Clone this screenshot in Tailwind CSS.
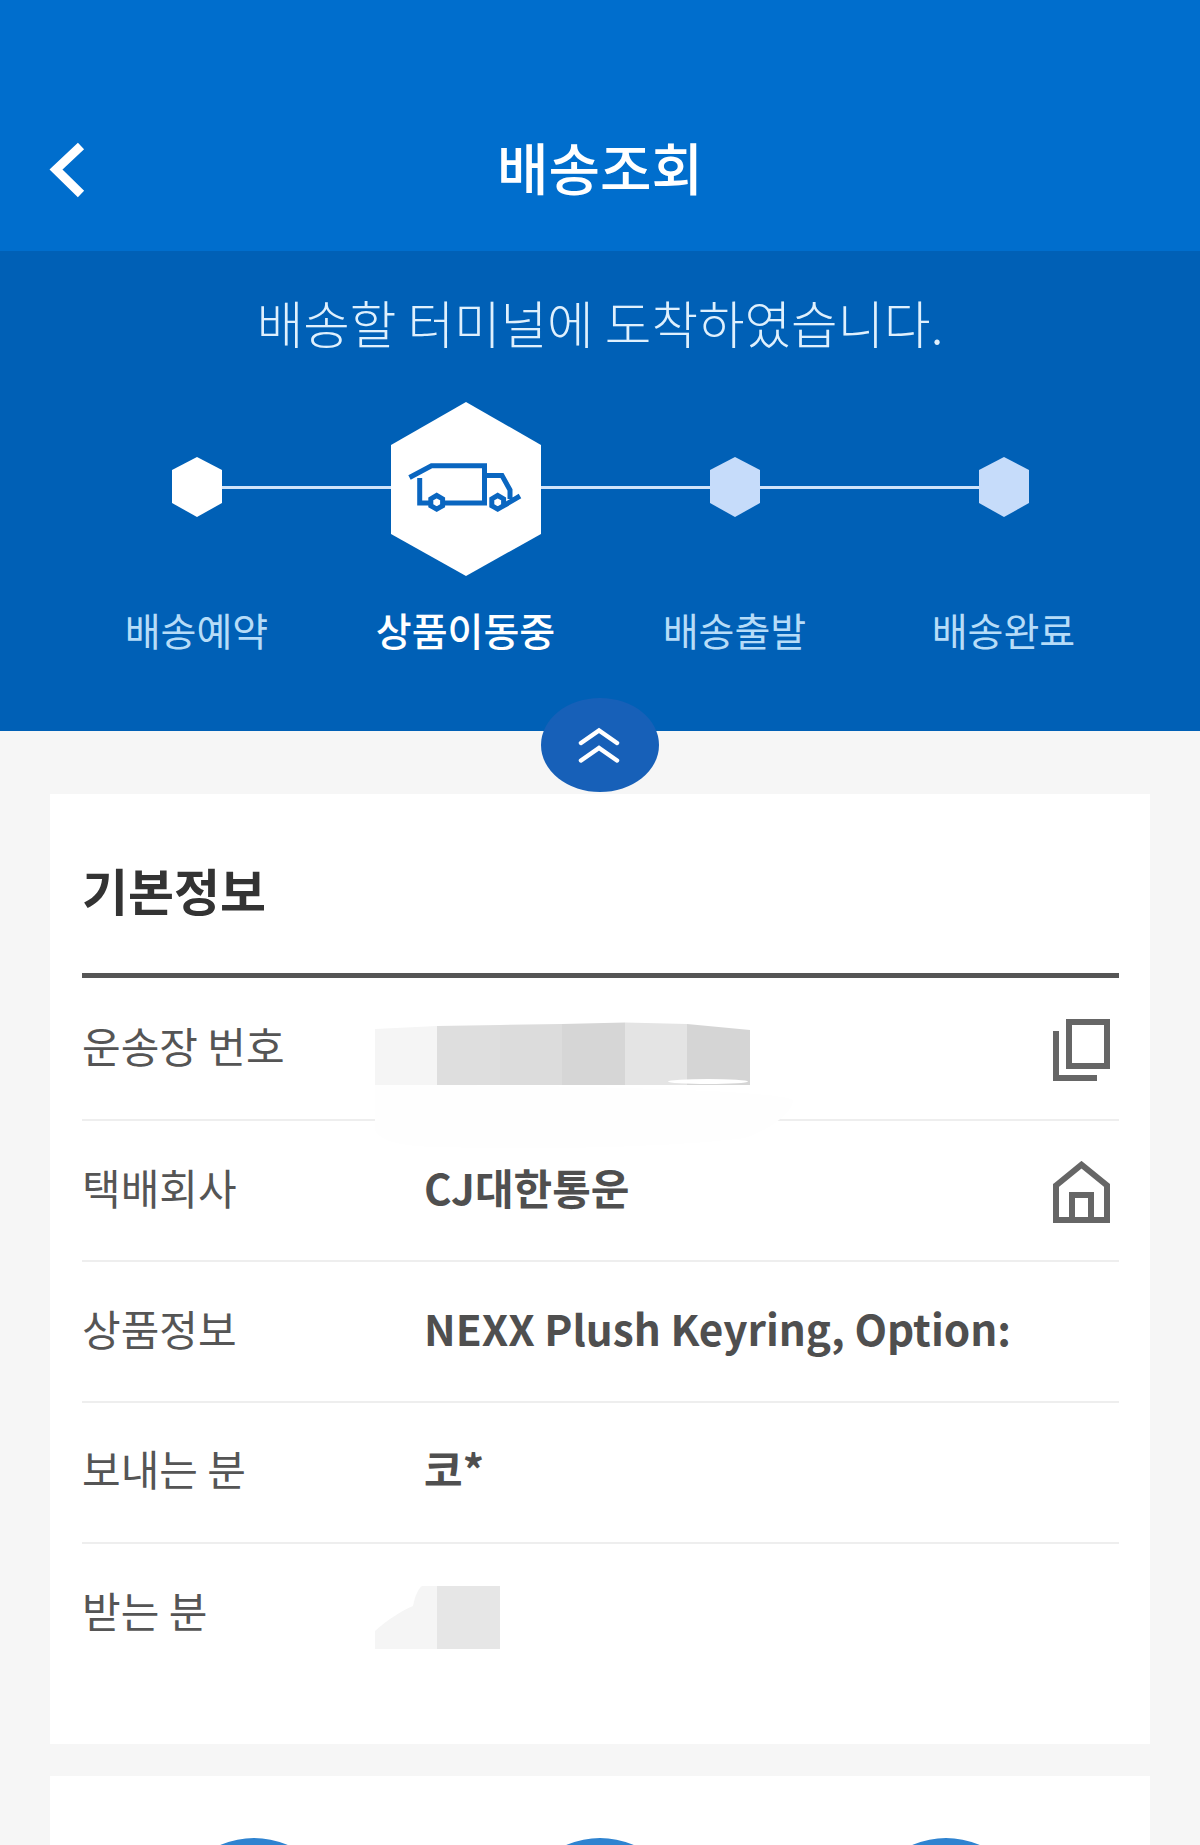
<!DOCTYPE html>
<html><head><meta charset="utf-8">
<script src="https://cdn.jsdelivr.net/npm/@tailwindcss/browser@4"></script>
</head>
<body class="m-0 bg-[#f6f6f6]">
<div class="relative w-[1200px] h-[1845px] overflow-hidden bg-[#f6f6f6] font-['Noto_Sans_CJK_KR','Noto_Sans',sans-serif] text-[#555]">
  <header class="relative h-[251px] bg-[#006ecd] text-white">
    <svg class="absolute left-[48px] top-[140px]" width="40" height="60" viewBox="0 0 40 60"><path d="M33 6 L8 29.5 L33 54" fill="none" stroke="#fff" stroke-width="9"/></svg>
    <h1 class="pt-[131px] text-center text-[56px] leading-[70px] font-medium">배송조회</h1>
  </header>
  <section class="relative h-[480px] bg-[#0060b6]">
    <p class="pt-[41px] pb-[1px] text-center text-[50.6px] leading-[60px] font-light text-[#dff0fd]">배송할 터미널에 도착하였습니다.</p>
    <div class="relative mx-[62px] mt-[49px] grid grid-cols-4">
      <div class="absolute left-[134px] right-[134px] top-[84px] h-[3px] bg-[#cfe3fa]"></div>
      <div class="relative flex flex-col items-center">
        <div class="h-[174px] pt-[55px]"><svg class="block" width="52" height="60" viewBox="0 0 52 60"><polygon points="26,0 51,13 51,46 26,60 1,46 1,13" fill="#fff"/></svg></div>
        <span class="mt-[25px] text-[39px] leading-[56px] text-[#b6dcf8]">배송예약</span>
      </div>
      <div class="relative flex flex-col items-center">
        <div class="relative h-[174px]">
          <svg class="block" width="152" height="174" viewBox="0 0 152 174"><polygon points="76,0 151,43 151,132 76,174 1,132 1,43" fill="#fff"/></svg>
          <svg class="absolute left-[10px] top-[48px]" width="130" height="70" viewBox="0 0 130 70">
            <path d="M9.5 27.5 L31.5 15.8 H84.5 V53 H44 M84.5 25.5 H102 L110 40 V49 M19.7 28 V53 H30 M105 55 L120 46" fill="none" stroke="#0a66c0" stroke-width="5"/>
            <polygon points="36.7,45.5 42.6,48.9 42.6,55.7 36.7,59.1 30.8,55.7 30.8,48.9" fill="#fff" stroke="#0a66c0" stroke-width="5"/>
            <polygon points="97.7,45.5 103.6,48.9 103.6,55.7 97.7,59.1 91.8,55.7 91.8,48.9" fill="#fff" stroke="#0a66c0" stroke-width="5"/>
          </svg>
        </div>
        <span class="mt-[25px] text-[39px] leading-[56px] font-medium text-white">상품이동중</span>
      </div>
      <div class="relative flex flex-col items-center">
        <div class="h-[174px] pt-[55px]"><svg class="block" width="52" height="60" viewBox="0 0 52 60"><polygon points="26,0 51,13 51,46 26,60 1,46 1,13" fill="#c6dcfa"/></svg></div>
        <span class="mt-[25px] text-[39px] leading-[56px] text-[#b6dcf8]">배송출발</span>
      </div>
      <div class="relative flex flex-col items-center">
        <div class="h-[174px] pt-[55px]"><svg class="block" width="52" height="60" viewBox="0 0 52 60"><polygon points="26,0 51,13 51,46 26,60 1,46 1,13" fill="#c6dcfa"/></svg></div>
        <span class="mt-[25px] text-[39px] leading-[56px] text-[#b6dcf8]">배송완료</span>
      </div>
    </div>
  </section>
  <div class="absolute left-[541px] top-[698px] flex h-[94px] w-[118px] items-center justify-center rounded-[50%] bg-[#1760b8]">
    <svg class="-translate-x-[1px]" width="44" height="36" viewBox="0 0 44 36"><path d="M4 16 L22 3.5 L40 16 M4 33.5 L22 21 L40 33.5" fill="none" stroke="#fff" stroke-width="4.5" stroke-linecap="round"/></svg>
  </div>
  <main class="mx-[50px] flex flex-col gap-[32px] pt-[63px]">
    <section class="h-[950px] bg-white px-[32px]">
      <h2 class="pt-[60px] text-[50px] leading-[70px] font-bold text-[#333]">기본정보</h2>
      <div class="mt-[49px] border-t-[5px] border-[#555] w-[1037px]"></div>
      <div class="relative flex h-[143px] w-[1037px] items-center border-b-2 border-[#eee] pb-[8px]">
        <span class="w-[343px] text-[42px]">운송장 번호</span>
        <svg class="absolute left-[293px] top-[34px]" width="420" height="140" viewBox="0 0 420 140">
          <path d="M0 73 V118 C5 130 30 135 70 135 C170 138 300 135 370 126 C395 118 418 100 418 88 C400 78 200 73 0 73 Z" fill="#fefefe"/>
          <polygon points="0,17 62,14 62,73 0,73" fill="#f5f5f5"/>
          <polygon points="62,14 125,13 125,73 62,73" fill="#dedede"/>
          <polygon points="125,13 187,12 187,73 125,73" fill="#dcdcdc"/>
          <polygon points="187,12 250,10.5 250,73 187,73" fill="#d6d6d6"/>
          <polygon points="250,10.5 312,12 312,73 250,73" fill="#e4e4e4"/>
          <polygon points="312,12 375,18 375,73 312,73" fill="#d5d5d5"/>
          <ellipse cx="333" cy="69.5" rx="40" ry="2.5" fill="#fff"/>
        </svg>
        <svg class="ml-auto mr-[8px] mt-[10px]" width="58" height="62" viewBox="0 0 58 62"><rect x="16" y="3" width="38" height="44" fill="none" stroke="#666" stroke-width="6"/><path d="M3 12 V59 H44" fill="none" stroke="#666" stroke-width="6"/></svg>
      </div>
      <div class="flex h-[141px] w-[1037px] items-center border-b-2 border-[#eee] pb-[8px]">
        <span class="w-[342px] text-[42px]">택배회사</span><b class="text-[42px] font-bold text-[#4f4f4f]">CJ대한통운</b>
        <svg class="ml-auto mr-[8px] mt-[10px]" width="58" height="62" viewBox="0 0 58 62"><path d="M3 24.5 L28.5 3.7 L54 24.5 V59 H3 Z M19 59 V34 H38 V59" fill="none" stroke="#666" stroke-width="6"/></svg>
      </div>
      <div class="flex h-[141px] w-[1037px] items-center border-b-2 border-[#eee] pb-[8px]"><span class="w-[342px] text-[42px]">상품정보</span><b class="text-[42.3px] font-bold text-[#4f4f4f] [font-feature-settings:'calt'_0] [font-variant-ligatures:none]">NEXX Plush Keyring, Option:</b></div>
      <div class="flex h-[141px] w-[1037px] items-center border-b-2 border-[#eee] pb-[10px]"><span class="w-[342px] text-[42px]">보내는 분</span><b class="text-[42px] font-bold text-[#4f4f4f]">코*</b></div>
      <div class="relative flex h-[140px] items-center pb-[10px]">
        <span class="w-[343px] text-[42px]">받는 분</span>
        <svg class="absolute left-[293px] top-[42px]" width="125" height="63" viewBox="0 0 125 63">
          <path d="M0 45 C12 34 28 24 38 20 C40 10 43 3 47 0 H62 V63 H0 Z" fill="#f5f5f5"/>
          <polygon points="62,0 125,0 125,63 62,63" fill="#e6e6e6"/>
        </svg>
      </div>
    </section>
    <section class="grid h-[200px] grid-cols-3 bg-white px-[31px] pt-[62px]">
      <div class="flex justify-center"><div class="h-[170px] w-[170px] rounded-full bg-[#2f83d0]"></div></div>
      <div class="flex justify-center"><div class="h-[170px] w-[170px] rounded-full bg-[#2f83d0]"></div></div>
      <div class="flex justify-center"><div class="h-[170px] w-[170px] rounded-full bg-[#2f83d0]"></div></div>
    </section>
  </main>
</div>
</body></html>
